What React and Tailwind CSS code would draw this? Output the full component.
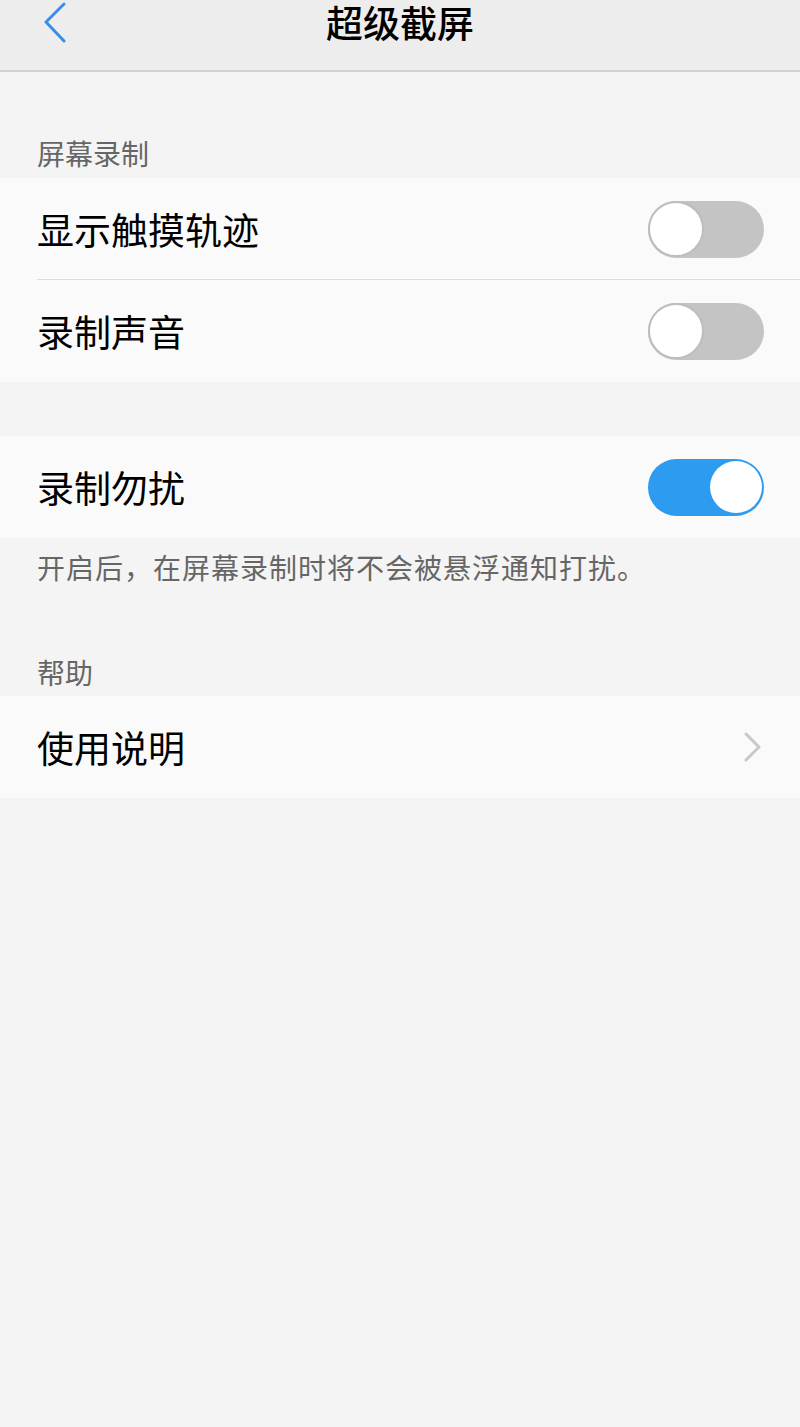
import React from 'react'

const font = { fontFamily: '"Noto Sans CJK SC", "Noto Sans", sans-serif' }

function Toggle({ on }) {
  return (
    <div
      className={`flex h-[57px] w-[116px] items-center rounded-full ${
        on ? 'justify-end bg-[#2d9bf0] px-[2px]' : 'justify-start bg-[#c4c4c4]'
      }`}
    >
      <div
        className={`rounded-full bg-white ${
          on ? 'h-[52px] w-[52px]' : 'h-[56px] w-[56px] border-[2px] border-[#bdbdbd]'
        }`}
      />
    </div>
  )
}

function Row({ label, children, divider }) {
  return (
    <div className="relative flex h-[102px] items-center justify-between pl-[37px] pr-[36px]">
      <span className="text-[37px] leading-none text-black">{label}</span>
      {children}
      {divider && <div className="absolute bottom-0 left-[37px] right-0 h-px bg-[#dcdcdc]" />}
    </div>
  )
}

export default function App() {
  return (
    <div className="min-h-[1427px] w-[800px] bg-[#f4f4f4]" style={font}>
      {/* Title bar */}
      <div className="relative flex h-[72px] items-start justify-center border-b-2 border-[#d2d2d2] bg-[#ededed]">
        <svg className="absolute left-[40px] top-[1px]" width="30" height="42" viewBox="0 0 30 42">
          <path d="M24 3 L6 21 L24 40" fill="none" stroke="#3a8ee6" strokeWidth="3" strokeLinecap="round" strokeLinejoin="round" />
        </svg>
        <span className="pt-[1px] text-[37px] font-medium leading-[42px] text-black">超级截屏</span>
      </div>

      <div className="px-[37px] pt-[63px] pb-[7px] text-[28px] leading-[36px] text-[#666]">屏幕录制</div>
      <div className="bg-[#fafafa]">
        <Row label="显示触摸轨迹" divider>
          <Toggle on={false} />
        </Row>
        <Row label="录制声音">
          <Toggle on={false} />
        </Row>
      </div>

      <div className="mt-[54px] bg-[#fafafa]">
        <Row label="录制勿扰">
          <Toggle on />
        </Row>
      </div>
      <div className="px-[37px] pt-[11px] text-[28px] leading-[36px] tracking-[1px] text-[#666]">
        开启后，在屏幕录制时将不会被悬浮通知打扰。
      </div>

      <div className="px-[37px] pt-[69px] pb-[6px] text-[28px] leading-[36px] text-[#666]">帮助</div>
      <div className="bg-[#fafafa]">
        <Row label="使用说明">
          <svg width="22" height="32" viewBox="0 0 22 32">
            <path d="M4 3 L17 16 L4 29" fill="none" stroke="#c8c8c8" strokeWidth="3" strokeLinecap="round" strokeLinejoin="round" />
          </svg>
        </Row>
      </div>
    </div>
  )
}
